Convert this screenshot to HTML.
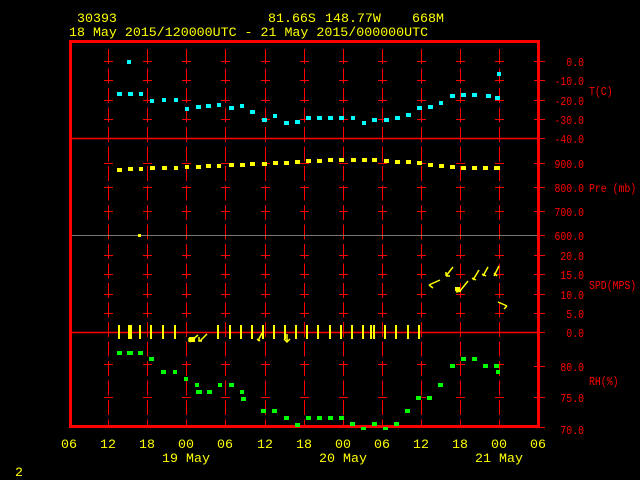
<!DOCTYPE html><html><head><style>body{margin:0;background:#000}svg{display:block}text{font-family:"Liberation Mono",monospace;font-size:13.3px}text.s{font-size:12px}</style></head><body>
<svg width="640" height="480" xmlns="http://www.w3.org/2000/svg">
<g fill="#ff0" >
<text x="77" y="22">30393</text>
<text x="268" y="22">81.66S</text><text x="325" y="22">148.77W</text><text x="412" y="22">668M</text>
<text x="69" y="36">18 May 2015/120000UTC - 21 May 2015/000000UTC</text>
<text x="15" y="476">2</text>
</g>
<g fill="#ff0" text-anchor="middle">
<text x="69" y="448">06</text><text x="108" y="448">12</text><text x="147" y="448">18</text><text x="186" y="448">00</text><text x="225" y="448">06</text><text x="265" y="448">12</text><text x="304" y="448">18</text><text x="343" y="448">00</text><text x="382" y="448">06</text><text x="421" y="448">12</text><text x="460" y="448">18</text><text x="499" y="448">00</text><text x="538" y="448">06</text>
<text x="186" y="462">19 May</text><text x="343" y="462">20 May</text><text x="499" y="462">21 May</text>
</g>
<g stroke="#f00" stroke-width="1" stroke-dasharray="15,4.5">
<line x1="108.5" y1="49" x2="108.5" y2="425"/><line x1="147.5" y1="49" x2="147.5" y2="425"/><line x1="186.5" y1="49" x2="186.5" y2="425"/><line x1="225.5" y1="49" x2="225.5" y2="425"/><line x1="265.5" y1="49" x2="265.5" y2="425"/><line x1="304.5" y1="49" x2="304.5" y2="425"/><line x1="343.5" y1="49" x2="343.5" y2="425"/><line x1="382.5" y1="49" x2="382.5" y2="425"/><line x1="421.5" y1="49" x2="421.5" y2="425"/><line x1="460.5" y1="49" x2="460.5" y2="425"/><line x1="499.5" y1="49" x2="499.5" y2="425"/>
</g>
<g stroke="#f00" stroke-width="1">
<path d="M104 61.5h9M143 61.5h9M182 61.5h9M221 61.5h9M261 61.5h9M300 61.5h9M339 61.5h9M378 61.5h9M417 61.5h9M456 61.5h9M495 61.5h9M534 61.5h11"/>
<path d="M104 80.5h9M143 80.5h9M182 80.5h9M221 80.5h9M261 80.5h9M300 80.5h9M339 80.5h9M378 80.5h9M417 80.5h9M456 80.5h9M495 80.5h9M534 80.5h11"/>
<path d="M104 100.5h9M143 100.5h9M182 100.5h9M221 100.5h9M261 100.5h9M300 100.5h9M339 100.5h9M378 100.5h9M417 100.5h9M456 100.5h9M495 100.5h9M534 100.5h11"/>
<path d="M104 119.5h9M143 119.5h9M182 119.5h9M221 119.5h9M261 119.5h9M300 119.5h9M339 119.5h9M378 119.5h9M417 119.5h9M456 119.5h9M495 119.5h9M534 119.5h11"/>
<path d="M104 163.5h9M143 163.5h9M182 163.5h9M221 163.5h9M261 163.5h9M300 163.5h9M339 163.5h9M378 163.5h9M417 163.5h9M456 163.5h9M495 163.5h9M534 163.5h11"/>
<path d="M104 187.5h9M143 187.5h9M182 187.5h9M221 187.5h9M261 187.5h9M300 187.5h9M339 187.5h9M378 187.5h9M417 187.5h9M456 187.5h9M495 187.5h9M534 187.5h11"/>
<path d="M104 211.5h9M143 211.5h9M182 211.5h9M221 211.5h9M261 211.5h9M300 211.5h9M339 211.5h9M378 211.5h9M417 211.5h9M456 211.5h9M495 211.5h9M534 211.5h11"/>
<path d="M104 255.5h9M143 255.5h9M182 255.5h9M221 255.5h9M261 255.5h9M300 255.5h9M339 255.5h9M378 255.5h9M417 255.5h9M456 255.5h9M495 255.5h9M534 255.5h11"/>
<path d="M104 274.5h9M143 274.5h9M182 274.5h9M221 274.5h9M261 274.5h9M300 274.5h9M339 274.5h9M378 274.5h9M417 274.5h9M456 274.5h9M495 274.5h9M534 274.5h11"/>
<path d="M104 294.5h9M143 294.5h9M182 294.5h9M221 294.5h9M261 294.5h9M300 294.5h9M339 294.5h9M378 294.5h9M417 294.5h9M456 294.5h9M495 294.5h9M534 294.5h11"/>
<path d="M104 313.5h9M143 313.5h9M182 313.5h9M221 313.5h9M261 313.5h9M300 313.5h9M339 313.5h9M378 313.5h9M417 313.5h9M456 313.5h9M495 313.5h9M534 313.5h11"/>
<path d="M104 364.5h9M143 364.5h9M182 364.5h9M221 364.5h9M261 364.5h9M300 364.5h9M339 364.5h9M378 364.5h9M417 364.5h9M456 364.5h9M495 364.5h9M534 366.5h11"/>
<path d="M104 397.5h9M143 397.5h9M182 397.5h9M221 397.5h9M261 397.5h9M300 397.5h9M339 397.5h9M378 397.5h9M417 397.5h9M456 397.5h9M495 397.5h9M534 397.5h11"/>
<path d="M534 138.5h11M534 235.5h11M534 332.5h11M534 427.5h11"/>
</g>
<line x1="72" y1="235.5" x2="538" y2="235.5" stroke="#777" stroke-width="1"/>
<line x1="72" y1="138.5" x2="538" y2="138.5" stroke="#f00" stroke-width="1.5"/>
<line x1="72" y1="332.5" x2="538" y2="332.5" stroke="#f00" stroke-width="1.5"/>
<rect x="70.5" y="41.5" width="468" height="385" fill="none" stroke="#f00" stroke-width="3"/>
<g fill="#f00" text-anchor="end">
<text class="s" x="584" y="66" textLength="17.7" lengthAdjust="spacingAndGlyphs">0.0</text><text class="s" x="584" y="85" textLength="29.5" lengthAdjust="spacingAndGlyphs">-10.0</text><text class="s" x="584" y="105" textLength="29.5" lengthAdjust="spacingAndGlyphs">-20.0</text><text class="s" x="584" y="124" textLength="29.5" lengthAdjust="spacingAndGlyphs">-30.0</text><text class="s" x="584" y="143" textLength="29.5" lengthAdjust="spacingAndGlyphs">-40.0</text>
<text class="s" x="584" y="168" textLength="29.5" lengthAdjust="spacingAndGlyphs">900.0</text><text class="s" x="584" y="192" textLength="29.5" lengthAdjust="spacingAndGlyphs">800.0</text><text class="s" x="584" y="216" textLength="29.5" lengthAdjust="spacingAndGlyphs">700.0</text><text class="s" x="584" y="240" textLength="29.5" lengthAdjust="spacingAndGlyphs">600.0</text>
<text class="s" x="584" y="260" textLength="23.6" lengthAdjust="spacingAndGlyphs">20.0</text><text class="s" x="584" y="279" textLength="23.6" lengthAdjust="spacingAndGlyphs">15.0</text><text class="s" x="584" y="299" textLength="23.6" lengthAdjust="spacingAndGlyphs">10.0</text><text class="s" x="584" y="318" textLength="17.7" lengthAdjust="spacingAndGlyphs">5.0</text><text class="s" x="584" y="337" textLength="17.7" lengthAdjust="spacingAndGlyphs">0.0</text>
<text class="s" x="584" y="371" textLength="23.6" lengthAdjust="spacingAndGlyphs">80.0</text><text class="s" x="584" y="402" textLength="23.6" lengthAdjust="spacingAndGlyphs">75.0</text><text class="s" x="584" y="434" textLength="23.6" lengthAdjust="spacingAndGlyphs">70.0</text>
</g>
<g fill="#f00"><text class="s" x="589" y="95" textLength="23.6" lengthAdjust="spacingAndGlyphs">T(C)</text><text class="s" x="589" y="192" textLength="47.2" lengthAdjust="spacingAndGlyphs">Pre (mb)</text><text class="s" x="589" y="289" textLength="47.2" lengthAdjust="spacingAndGlyphs">SPD(MPS)</text><text class="s" x="589" y="385" textLength="29.5" lengthAdjust="spacingAndGlyphs">RH(%)</text></g>
<g fill="#0ff">
<rect x="127" y="60" width="4" height="4"/>
<rect x="117" y="92" width="5" height="4"/><rect x="128" y="92" width="5" height="4"/><rect x="139" y="92" width="4" height="4"/>
<rect x="150" y="99" width="4" height="4"/><rect x="162" y="98" width="4" height="4"/><rect x="174" y="98" width="4" height="4"/>
<rect x="185" y="107" width="4" height="4"/><rect x="196" y="105" width="5" height="4"/><rect x="206" y="104" width="5" height="4"/><rect x="217" y="103" width="4" height="4"/><rect x="229" y="106" width="5" height="4"/><rect x="240" y="104" width="4" height="4"/>
<rect x="250" y="110" width="5" height="4"/><rect x="262" y="118" width="5" height="4"/><rect x="273" y="114" width="4" height="4"/><rect x="284" y="121" width="5" height="4"/><rect x="295" y="120" width="5" height="4"/><rect x="306" y="116" width="5" height="4"/><rect x="317" y="116" width="5" height="4"/><rect x="328" y="116" width="5" height="4"/><rect x="339" y="116" width="5" height="4"/><rect x="351" y="116" width="4" height="4"/><rect x="362" y="121" width="4" height="4"/><rect x="372" y="118" width="5" height="4"/><rect x="384" y="118" width="5" height="4"/><rect x="395" y="116" width="5" height="4"/><rect x="406" y="113" width="5" height="4"/><rect x="417" y="106" width="5" height="4"/><rect x="428" y="105" width="5" height="4"/><rect x="439" y="101" width="4" height="4"/><rect x="450" y="94" width="5" height="4"/><rect x="461" y="93" width="5" height="4"/><rect x="472" y="93" width="5" height="4"/><rect x="486" y="94" width="5" height="4"/><rect x="495" y="96" width="5" height="4"/><rect x="497" y="72" width="4" height="4"/>
</g>
<g fill="#ff0">
<rect x="117" y="168" width="5" height="4"/><rect x="128" y="167" width="5" height="4"/><rect x="139" y="167" width="4" height="4"/><rect x="150" y="166" width="5" height="4"/><rect x="162" y="166" width="5" height="4"/><rect x="174" y="166" width="4" height="4"/><rect x="185" y="165" width="4" height="4"/><rect x="196" y="165" width="5" height="4"/><rect x="206" y="164" width="5" height="4"/><rect x="217" y="164" width="4" height="4"/><rect x="229" y="163" width="5" height="4"/><rect x="240" y="163" width="5" height="4"/><rect x="250" y="162" width="5" height="4"/><rect x="262" y="162" width="5" height="4"/><rect x="273" y="161" width="5" height="4"/><rect x="284" y="161" width="5" height="4"/><rect x="295" y="160" width="5" height="4"/><rect x="306" y="159" width="5" height="4"/><rect x="317" y="159" width="5" height="4"/><rect x="328" y="158" width="5" height="4"/><rect x="339" y="158" width="5" height="4"/><rect x="351" y="158" width="5" height="4"/><rect x="362" y="158" width="5" height="4"/><rect x="372" y="158" width="5" height="4"/><rect x="384" y="159" width="5" height="4"/><rect x="395" y="160" width="5" height="4"/><rect x="406" y="160" width="5" height="4"/><rect x="417" y="161" width="5" height="4"/><rect x="428" y="163" width="5" height="4"/><rect x="439" y="164" width="5" height="4"/><rect x="450" y="165" width="5" height="4"/><rect x="461" y="166" width="5" height="4"/><rect x="472" y="166" width="5" height="4"/><rect x="483" y="166" width="5" height="4"/><rect x="494" y="166" width="6" height="4"/>
<rect x="138" y="234" width="3" height="3"/>
</g>
<g stroke="#ff0" stroke-width="2">
<path d="M119 325v14M129 325v14M131 325v14M140 325v14M151 325v14M163 325v14M175 325v14M218 325v14M230 325v14M241 325v14M252 325v14M263 325v14M274 325v14M285 325v14M296 325v14M307 325v14M318 325v14M330 325v14M341 325v14M352 325v14M363 325v14M371 325v14M374 325v14M385 325v14M396 325v14M408 325v14M419 325v14"/>
</g>
<g stroke="#ff0" stroke-width="1.5" fill="none">
<path d="M190 342l8-7M193 341h-4v-3M200 341l7-7M202 341h-3v-4M258 341l4-8M260 341l-3-2M287 342v-8M284 339l3 3 3-3M429 285l11-5M429 285l4 3M446 276l7-9M446 276l0-4M446 276l4 0M460 291l8-10M456 292l5-1M473 280l6-10M476 280l-4-2M483 276l5-9M486 276l-4-2M494 276l5-10M497 276l-3-3M498 302l9 4M507 306l-3 3"/>
</g>
<g fill="#ff0"><rect x="189" y="337" width="6" height="5"/><rect x="455" y="287" width="5" height="4"/></g>
<g fill="#0f0">
<rect x="117" y="351" width="5" height="4"/><rect x="127" y="351" width="6" height="4"/><rect x="138" y="351" width="5" height="4"/><rect x="149" y="357" width="5" height="4"/><rect x="161" y="370" width="5" height="4"/><rect x="173" y="370" width="4" height="4"/><rect x="184" y="377" width="4" height="4"/><rect x="195" y="383" width="4" height="4"/><rect x="196" y="390" width="6" height="4"/><rect x="207" y="390" width="5" height="4"/><rect x="218" y="383" width="4" height="4"/><rect x="229" y="383" width="5" height="4"/><rect x="240" y="390" width="4" height="4"/><rect x="241" y="397" width="5" height="4"/><rect x="261" y="409" width="5" height="4"/><rect x="272" y="409" width="5" height="4"/><rect x="284" y="416" width="5" height="4"/><rect x="295" y="423" width="5" height="4"/><rect x="306" y="416" width="5" height="4"/><rect x="317" y="416" width="5" height="4"/><rect x="328" y="416" width="5" height="4"/><rect x="339" y="416" width="5" height="4"/><rect x="350" y="422" width="5" height="4"/><rect x="361" y="427" width="5" height="3"/><rect x="372" y="422" width="5" height="4"/><rect x="383" y="427" width="5" height="3"/><rect x="394" y="422" width="5" height="4"/><rect x="405" y="409" width="5" height="4"/><rect x="416" y="396" width="5" height="4"/><rect x="427" y="396" width="5" height="4"/><rect x="438" y="383" width="5" height="4"/><rect x="450" y="364" width="5" height="4"/><rect x="461" y="357" width="5" height="4"/><rect x="472" y="357" width="5" height="4"/><rect x="483" y="364" width="5" height="4"/><rect x="494" y="364" width="5" height="4"/><rect x="496" y="370" width="4" height="4"/>
</g>
</svg></body></html>
